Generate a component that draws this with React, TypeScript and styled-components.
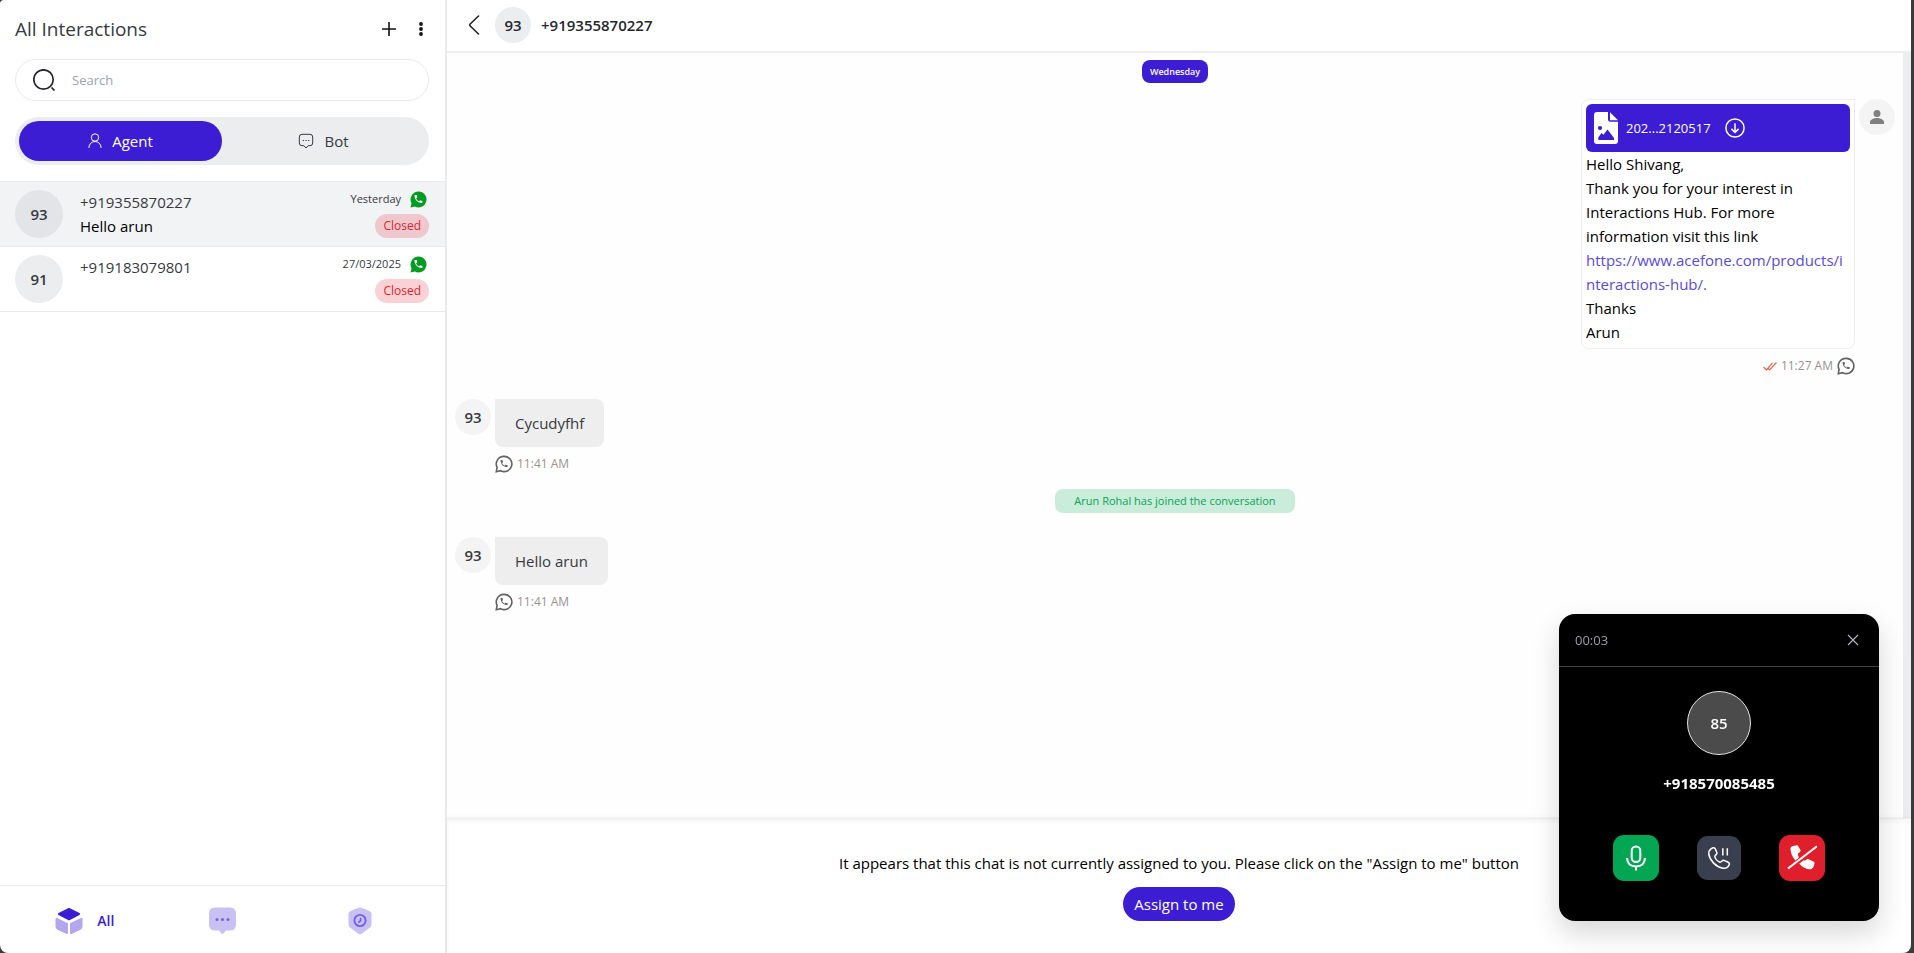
import React from "react";
import styled, { createGlobalStyle } from "styled-components";

const color = {
  brand: "#3d1dd3",
  ink: "#373a40",
  line: "#e9eaec",
  soft: "#ecedef",
  muted: "#999390",
};

const GlobalStyle = createGlobalStyle`
  *, *::before, *::after { box-sizing: border-box; }
  html, body, #root { height: 100%; }
  body {
    margin: 0;
    background: #3b3b3b;
    font-family: "Open Sans", "Noto Sans", sans-serif;
    font-size: 15px;
    line-height: 24px;
    color: ${color.ink};
  }
  h1, h2, p { margin: 0; font-size: inherit; font-weight: inherit; }
  button { font: inherit; color: inherit; border: 0; padding: 0; background: none; cursor: pointer; }
  svg { display: block; flex: none; }
`;

const Shell = styled.div`
  display: flex;
  height: 100vh;
  margin-right: 3px;
  background: #fff;
  border-radius: 4px 0 8px 8px;
  overflow: hidden;
`;

const Sidebar = styled.aside`
  flex: 0 0 447px;
  display: flex;
  flex-direction: column;
  border-right: 2px solid ${color.line};
`;

const SidebarTop = styled.header`
  display: flex;
  flex-direction: column;
  padding: 15px 16px 16px 15px;
  gap: 16px;
`;

const TitleBar = styled.div`
  display: flex;
  align-items: center;
  justify-content: space-between;
  height: 28px;
`;

const Title = styled.h1`
  font-size: 19px;
  line-height: 30px;
`;

const TitleActions = styled.div`
  display: flex;
  gap: 16px;
`;

const IconButton = styled.button`
  display: grid;
  place-items: center;
  width: 16px;
  height: 24px;
`;

const SearchBox = styled.label`
  display: flex;
  align-items: center;
  gap: 17px;
  height: 42px;
  padding: 0 17px;
  border: 1px solid ${color.line};
  border-radius: 21px;
`;

const SearchInput = styled.input`
  flex: 1;
  min-width: 0;
  border: 0;
  padding: 0;
  outline: 0;
  font: inherit;
  font-size: 13px;
  background: none;
  &::placeholder { color: #9ca3af; opacity: 1; }
`;

const Tabs = styled.div`
  display: flex;
  height: 48px;
  padding: 4px;
  border-radius: 24px;
  background: ${color.soft};
`;

const Tab = styled.button<{ $active?: boolean }>`
  flex: 1;
  display: flex;
  align-items: center;
  justify-content: center;
  gap: 10px;
  border-radius: 20px;
  color: ${(p) => (p.$active ? "#fff" : color.ink)};
  background: ${(p) => (p.$active ? color.brand : "transparent")};
`;

const List = styled.ul`
  flex: 1;
  margin: 0;
  padding: 0;
  list-style: none;
  border-top: 1px solid ${color.line};
`;

const Row = styled.li<{ $active?: boolean }>`
  display: flex;
  height: 65px;
  padding: 8px 16px 8px 15px;
  gap: 17px;
  border-bottom: 1px solid ${color.line};
  background: ${(p) => (p.$active ? "#f2f3f5" : "#fff")};
`;

const Avatar = styled.span<{ $size: number; $tone: string }>`
  flex: none;
  display: grid;
  place-items: center;
  width: ${(p) => p.$size}px;
  height: ${(p) => p.$size}px;
  border-radius: 50%;
  background: ${(p) => p.$tone};
  font-weight: 600;
`;

const RowText = styled.div`
  flex: 1;
  color: #000;
`;

const RowName = styled.h2`
  color: ${color.ink};
`;

const RowSide = styled.div`
  display: flex;
  flex-direction: column;
  align-items: flex-end;
  gap: 6px;
`;

const RowDate = styled.div`
  display: flex;
  align-items: center;
  gap: 9px;
  padding-right: 2px;
  font-size: 11px;
  line-height: 18px;
`;

const Status = styled.span`
  padding: 0 8px;
  border-radius: 12px;
  background: rgba(230, 30, 50, 0.2);
  color: #dc1f2e;
  font-size: 12px;
  line-height: 24px;
`;

const BottomNav = styled.nav`
  display: flex;
  align-items: flex-start;
  height: 68px;
  padding: 20px 16px 0;
  border-top: 1px solid ${color.line};
`;

const NavItem = styled.button`
  flex: 1 1 0;
  display: flex;
  align-items: center;
  justify-content: center;
  gap: 14px;
  height: 30px;
  color: ${color.brand};
  font-size: 14px;
  font-weight: 600;
`;

const Main = styled.main`
  flex: 1;
  min-width: 0;
  display: flex;
  flex-direction: column;
`;

const ChatHeader = styled.header`
  display: flex;
  align-items: center;
  height: 53px;
  padding: 0 16px 2px;
  gap: 10px;
  border-bottom: 2px solid #eee;
  color: #25272c;
  font-weight: 600;
`;

const BackButton = styled.button`
  display: grid;
  place-items: center;
  width: 22px;
  height: 28px;
`;

const ChatBody = styled.div`
  flex: 1;
  min-height: 0;
  display: flex;
`;

const Thread = styled.div`
  flex: 1;
  display: flex;
  flex-direction: column;
  padding: 7px 8px;
  background: #fefefe;
`;

const ScrollTrack = styled.div`
  width: 8px;
  background: ${color.soft};
`;

const DayPill = styled.span`
  align-self: center;
  padding: 0 8px;
  border-radius: 8px;
  background: ${color.brand};
  color: #fff;
  font-size: 9px;
  font-weight: 600;
  line-height: 23px;
`;

const EventPill = styled.span`
  align-self: center;
  margin: 13px 0 24px;
  padding: 0 19px;
  border-radius: 8px;
  background: #caecda;
  color: #08a357;
  font-size: 11px;
  line-height: 24px;
`;

const Message = styled.article<{ $own?: boolean }>`
  display: flex;
  flex-direction: ${(p) => (p.$own ? "row-reverse" : "row")};
  gap: 4px;
  margin-top: ${(p) => (p.$own ? "16px" : "0")};
  margin-bottom: ${(p) => (p.$own ? "21px" : "0")};
`;

const MessageColumn = styled.div<{ $own?: boolean }>`
  display: flex;
  flex-direction: column;
  align-items: ${(p) => (p.$own ? "flex-end" : "flex-start")};
  gap: 5px;
`;

const Bubble = styled.p`
  padding: 12px 20px;
  border-radius: 0 8px 8px 8px;
  background: #eee;
`;

const Card = styled.div`
  width: 274px;
  padding: 4px;
  border: 1px solid #eee;
  border-radius: 8px 0 8px 8px;
  background: #fff;
  color: #000;
`;

const Attachment = styled.div`
  display: flex;
  align-items: center;
  height: 48px;
  padding: 0 8px;
  gap: 8px;
  border-radius: 6px;
  background: ${color.brand};
  color: #fff;
  font-size: 13px;
`;

const DownloadButton = styled.button`
  margin-left: 6px;
`;

const TextLink = styled.a`
  display: block;
  color: #574be0;
  text-decoration: none;
  word-break: break-all;
`;

const Meta = styled.div`
  display: flex;
  align-items: center;
  gap: 4px;
  color: ${color.muted};
  font-size: 12px;
`;

const ChatFooter = styled.footer`
  display: flex;
  flex-direction: column;
  align-items: center;
  gap: 12px;
  height: 135px;
  padding-top: 32px;
  border-top: 1px solid #eee;
  box-shadow: 0 -1px 3px rgba(0, 0, 0, 0.05), inset 0 3px 5px rgba(0, 0, 0, 0.04);
  color: #000;
`;

const AssignButton = styled.button`
  height: 34px;
  padding: 0 11px;
  border-radius: 17px;
  background: ${color.brand};
  color: #fff;
`;

const CallPanel = styled.section`
  position: fixed;
  right: 35px;
  bottom: 32px;
  width: 320px;
  border-radius: 16px;
  background: #000;
  color: #fff;
  box-shadow: 0 12px 28px rgba(0, 0, 0, 0.16);
`;

const CallHeader = styled.header`
  display: flex;
  align-items: center;
  justify-content: space-between;
  height: 53px;
  padding: 0 18px 0 16px;
  border-bottom: 1px solid #414141;
  color: #9b9da6;
  font-size: 13px;
`;

const CallBody = styled.div`
  display: flex;
  flex-direction: column;
  align-items: center;
  padding: 24px 0 40px;
  font-weight: 700;
`;

const CallAvatar = styled(Avatar)`
  border: 1px solid #e4e4e4;
  margin-bottom: 16px;
`;

const CallActions = styled.div`
  display: flex;
  align-items: center;
  gap: 38px;
  margin-top: 40px;
`;

const CallButton = styled.button<{ $size: number; $tone: string }>`
  display: grid;
  place-items: center;
  width: ${(p) => p.$size}px;
  height: ${(p) => p.$size}px;
  border-radius: 11px;
  background: ${(p) => p.$tone};
`;

const HANDSET =
  "M6.6 10.8c1.4 2.8 3.8 5.1 6.6 6.6l2.2-2.2c.3-.3.7-.4 1-.2 1.1.4 2.3.6 3.6.6.6 0 1 .4 1 1V20c0 .6-.4 1-1 1C10.600 21 3 13.400 3 4c0-.6.4-1 1-1h3.500c.6 0 1 .4 1 1 0 1.200.2 2.500.6 3.600.1.300 0 .7-.2 1z";

const PlusIcon = () => (
  <svg width="16" height="16" viewBox="0 0 16 16" stroke="#111" strokeWidth="1.6">
    <path d="M8 1v14M1 8h14" />
  </svg>
);

const DotsIcon = () => (
  <svg width="16" height="16" viewBox="0 0 16 16" fill="#111">
    <circle cx="8" cy="3" r="1.900" />
    <circle cx="8" cy="8" r="1.900" />
    <circle cx="8" cy="13" r="1.900" />
  </svg>
);

const SearchIcon = () => (
  <svg width="22" height="22" viewBox="0 0 22 22" fill="none" stroke="#25282c" strokeWidth="1.700">
    <circle cx="10.500" cy="10.500" r="9.700" />
    <path d="M18.500 18.500l3 3" />
  </svg>
);

const PersonOutline = () => (
  <svg width="14" height="16" viewBox="0 0 14 16" fill="none" stroke="currentColor" strokeWidth="1">
    <circle cx="7" cy="4.500" r="3.700" />
    <path d="M1 15v-.700a6 5.800 0 0 1 12 0v.700" />
  </svg>
);

const BotIcon = () => (
  <svg width="16" height="16" viewBox="0 0 16 16" fill="none" stroke="currentColor" strokeWidth="1">
    <path d="M4 1.300h8q2.700 0 2.700 2.700v6q0 2.700-2.700 2.700h-1.800L8 15l-2.200-2.300H4Q1.300 12.700 1.300 10V4Q1.300 1.300 4 1.300z" />
    <path d="M4.700 7.500h1.200M7.400 7.500h1.200M10.100 7.500h1.200" />
  </svg>
);

const WhatsAppFilled = () => (
  <svg width="17" height="17" viewBox="0 0 17 17">
    <path d="M8.500.5a8 8 0 1 1-3.700 15.100L.5 16.500l1-4.200A8 8 0 0 1 8.500.5z" fill="#049b22" />
    <path d={HANDSET} fill="#fff" transform="translate(3.200 2.800) scale(.44)" />
  </svg>
);

const WhatsAppOutline = () => (
  <svg width="18" height="18" viewBox="0 0 18 18">
    <path d="M9.200 1.400a7.600 7.600 0 1 1-3.500 14.300L1.300 16.700l.800-4.300A7.600 7.600 0 0 1 9.200 1.400z" fill="none" stroke="#626262" strokeWidth="1.600" />
    <path d={HANDSET} fill="#626262" transform="translate(4.400 3.900) scale(.39)" />
  </svg>
);

const TicksIcon = () => (
  <svg width="14" height="9" viewBox="0 0 14 9" fill="none" stroke="#e8694a" strokeWidth="1.200">
    <path d="M.500 5l3 3L9.500.8M5 6.500L6.600 8l6.800-7.500" />
  </svg>
);

const FileImageIcon = () => (
  <svg width="24" height="32" viewBox="0 0 24 32" fill="#fff">
    <path d="M3 0h11v7.500q0 2.300 2.300 2.300H24V29q0 3-3 3H3q-3 0-3-3V3Q0 0 3 0z" />
    <path d="M16 .200L24 8.200h-8z" />
    <circle cx="6" cy="16" r="2.100" fill={color.brand} />
    <path d="M4.300 28v-2.500L7.500 21l2 1.800L13.500 17.600 20 26v2z" fill={color.brand} />
  </svg>
);

const DownloadIcon = () => (
  <svg width="20" height="20" viewBox="0 0 20 20" fill="none" stroke="#fff" strokeWidth="1.500">
    <circle cx="10" cy="10" r="9.100" />
    <path d="M10 5.300v9M6.400 10.900l3.600 3.600 3.600-3.600" />
  </svg>
);

const PersonSolid = () => (
  <svg width="14" height="14" viewBox="0 0 14 14" fill="#808080">
    <circle cx="7" cy="3.500" r="3.500" />
    <path d="M0 14v-2c0-2.400 4-4 7-4s7 1.600 7 4v2z" />
  </svg>
);

const CubeIcon = () => (
  <svg width="28" height="28" viewBox="0 0 28 28" strokeLinejoin="round" strokeWidth="2">
    <path d="M14 1.800L24 7 14 12.300 4 7z" fill={color.brand} stroke={color.brand} />
    <path d="M1.500 11.800L12 17v9L3 21.800q-1.500-.8-1.500-2zM26.500 11.800L16 17v9l9-4.200q1.500-.8 1.500-2z" fill="#b3a6ee" stroke="#b3a6ee" />
  </svg>
);

const ChatNavIcon = () => (
  <svg width="27" height="28" viewBox="0 0 27 28">
    <path d="M6 .5h15q6 0 6 6v11q0 6-6 6h-4l-2.600 3q-.9 1-1.800 0L10 23.500H6q-6 0-6-6v-11q0-6 6-6z" fill="#c9c0f4" />
    <g fill="#7760e2">
      <circle cx="8" cy="12.500" r="1.500" />
      <circle cx="13.500" cy="12.500" r="1.500" />
      <circle cx="19" cy="12.500" r="1.500" />
    </g>
  </svg>
);

const ShieldIcon = () => (
  <svg width="24" height="28" viewBox="0 0 24 28">
    <path d="M10.500.7q1.500-.6 3 0l8 3.200q2 .9 2 3v10q0 2-1.500 3.500l-8 6.200q-2 1.200-4 0l-8-6.200Q.500 18.900.500 16.900v-10q0-2.100 2-3z" fill="#c9c0f4" />
    <circle cx="12" cy="13.500" r="5.600" fill="none" stroke="#7760e2" strokeWidth="1.900" />
    <path d="M12.600 10.800v3l-2.300 1.700" fill="none" stroke="#7760e2" strokeWidth="1.700" />
  </svg>
);

const BackIcon = () => (
  <svg width="12" height="20" viewBox="0 0 12 20" fill="none" stroke="#222" strokeWidth="1.600" strokeLinecap="round">
    <path d="M10.500 1L2.200 9q-1 1 0 2l8.300 8" />
  </svg>
);

const CloseIcon = () => (
  <svg width="12" height="12" viewBox="0 0 12 12" stroke="#b5b8c2" strokeWidth="1.100">
    <path d="M1 1l10 10M11 1L1 11" />
  </svg>
);

const MicIcon = () => (
  <svg width="20" height="26" viewBox="0 0 20 26" fill="none" stroke="#fff" strokeWidth="2">
    <rect x="5.700" y="1.500" width="8.600" height="15.500" rx="4.300" />
    <path d="M1 13q.500 8.500 9 8.500t9-8.500M10 21.500v4" />
  </svg>
);

const HoldIcon = () => (
  <svg width="24" height="24" viewBox="-1 -1 24 24" fill="none" stroke="#fff" strokeWidth="1.500" strokeLinejoin="round">
    <path d="M3 1.800C5 .5 6.800.4 7.400 2L9 6C9.400 7.200 6.600 8.400 6.800 9.600 7.400 12 10 14.600 12 15.200 13.600 15.400 14.200 12.800 16 13.400L20.200 15.200C22 16 21.400 18 20.400 19.200 19 21 16.800 21.600 14.800 21.200 8 20 1.800 13.600.8 7.200.6 5 1.400 3 3 1.800z" />
    <path d="M14.800 1.200v7.400M19.300 1.200v7.400" />
  </svg>
);

const HangUpIcon = () => (
  <svg width="30" height="26" viewBox="0 0 30 26" fill="#fff">
    <path d="M3.500 3Q4 1.500 6 1L9 .400Q10.800.200 11.400 1.400L13.700 5.500Q13.700 6.800 10.800 8.700 10.900 10.700 12 12.600L8.300 15.400Q3.200 9.500 3.500 3z" />
    <path d="M12.200 18.700L16.800 15.200Q18.200 16 19.200 14.800 20 13.500 21.600 14.300L26.500 16.400Q27.600 17 27.500 18.500 27.200 22 24.600 24 18.400 25.200 12.200 18.700z" />
    <path d="M1 23.500L30 1.200" stroke="#fff" strokeWidth="2" />
  </svg>
);

type Conversation = { id: string; badge: string; name: string; preview: string; date: string; active?: boolean };

const conversations: Conversation[] = [
  { id: "a", badge: "93", name: "+919355870227", preview: "Hello arun", date: "Yesterday", active: true },
  { id: "b", badge: "91", name: "+919183079801", preview: "", date: "27/03/2025" },
];

const Incoming = ({ text }: { text: string }) => (
  <Message>
    <Avatar $size={36} $tone="#f4f4f4">93</Avatar>
    <MessageColumn>
      <Bubble>{text}</Bubble>
      <Meta>
        <WhatsAppOutline />
        <time>11:41 AM</time>
      </Meta>
    </MessageColumn>
  </Message>
);

export default function App() {
  return (
    <>
      <GlobalStyle />
      <Shell>
        <Sidebar>
          <SidebarTop>
            <TitleBar>
              <Title>All Interactions</Title>
              <TitleActions>
                <IconButton aria-label="New interaction"><PlusIcon /></IconButton>
                <IconButton aria-label="More options"><DotsIcon /></IconButton>
              </TitleActions>
            </TitleBar>
            <SearchBox>
              <SearchIcon />
              <SearchInput type="text" placeholder="Search" aria-label="Search" />
            </SearchBox>
            <Tabs>
              <Tab $active><PersonOutline />Agent</Tab>
              <Tab><BotIcon />Bot</Tab>
            </Tabs>
          </SidebarTop>
          <List>
            {conversations.map((c) => (
              <Row key={c.id} $active={c.active}>
                <Avatar $size={48} $tone={c.active ? "#e2e4e8" : color.soft}>{c.badge}</Avatar>
                <RowText>
                  <RowName>{c.name}</RowName>
                  <p>{c.preview}</p>
                </RowText>
                <RowSide>
                  <RowDate>{c.date}<WhatsAppFilled /></RowDate>
                  <Status>Closed</Status>
                </RowSide>
              </Row>
            ))}
          </List>
          <BottomNav>
            <NavItem><CubeIcon />All</NavItem>
            <NavItem aria-label="Chats"><ChatNavIcon /></NavItem>
            <NavItem aria-label="Pending"><ShieldIcon /></NavItem>
          </BottomNav>
        </Sidebar>

        <Main>
          <ChatHeader>
            <BackButton aria-label="Back"><BackIcon /></BackButton>
            <Avatar $size={36} $tone={color.soft}>93</Avatar>
            <h2>+919355870227</h2>
          </ChatHeader>
          <ChatBody>
            <Thread>
              <DayPill>Wednesday</DayPill>
              <Message $own>
                <Avatar $size={36} $tone="#f4f4f4"><PersonSolid /></Avatar>
                <MessageColumn $own>
                  <Card>
                    <Attachment>
                      <FileImageIcon />
                      202...2120517
                      <DownloadButton aria-label="Download"><DownloadIcon /></DownloadButton>
                    </Attachment>
                    <p>Hello Shivang,</p>
                    <p>Thank you for your interest in Interactions Hub. For more information visit this link</p>
                    <TextLink href="#interactions-hub">https://www.acefone.com/products/interactions-hub/.</TextLink>
                    <p>Thanks</p>
                    <p>Arun</p>
                  </Card>
                  <Meta>
                    <TicksIcon />
                    <time>11:27 AM</time>
                    <WhatsAppOutline />
                  </Meta>
                </MessageColumn>
              </Message>
              <Incoming text="Cycudyfhf" />
              <EventPill>Arun Rohal has joined the conversation</EventPill>
              <Incoming text="Hello arun" />
            </Thread>
            <ScrollTrack />
          </ChatBody>
          <ChatFooter>
            <p>It appears that this chat is not currently assigned to you. Please click on the "Assign to me" button</p>
            <AssignButton>Assign to me</AssignButton>
          </ChatFooter>
        </Main>
      </Shell>

      <CallPanel aria-label="Active call">
        <CallHeader>
          <time>00:03</time>
          <IconButton aria-label="Close"><CloseIcon /></IconButton>
        </CallHeader>
        <CallBody>
          <CallAvatar $size={64} $tone="#4a4b4a">85</CallAvatar>
          <p>+918570085485</p>
          <CallActions>
            <CallButton $size={46} $tone="#03a653" aria-label="Mute"><MicIcon /></CallButton>
            <CallButton $size={44} $tone="#3a3f50" aria-label="Hold"><HoldIcon /></CallButton>
            <CallButton $size={46} $tone="#e01f2d" aria-label="Hang up"><HangUpIcon /></CallButton>
          </CallActions>
        </CallBody>
      </CallPanel>
    </>
  );
}
